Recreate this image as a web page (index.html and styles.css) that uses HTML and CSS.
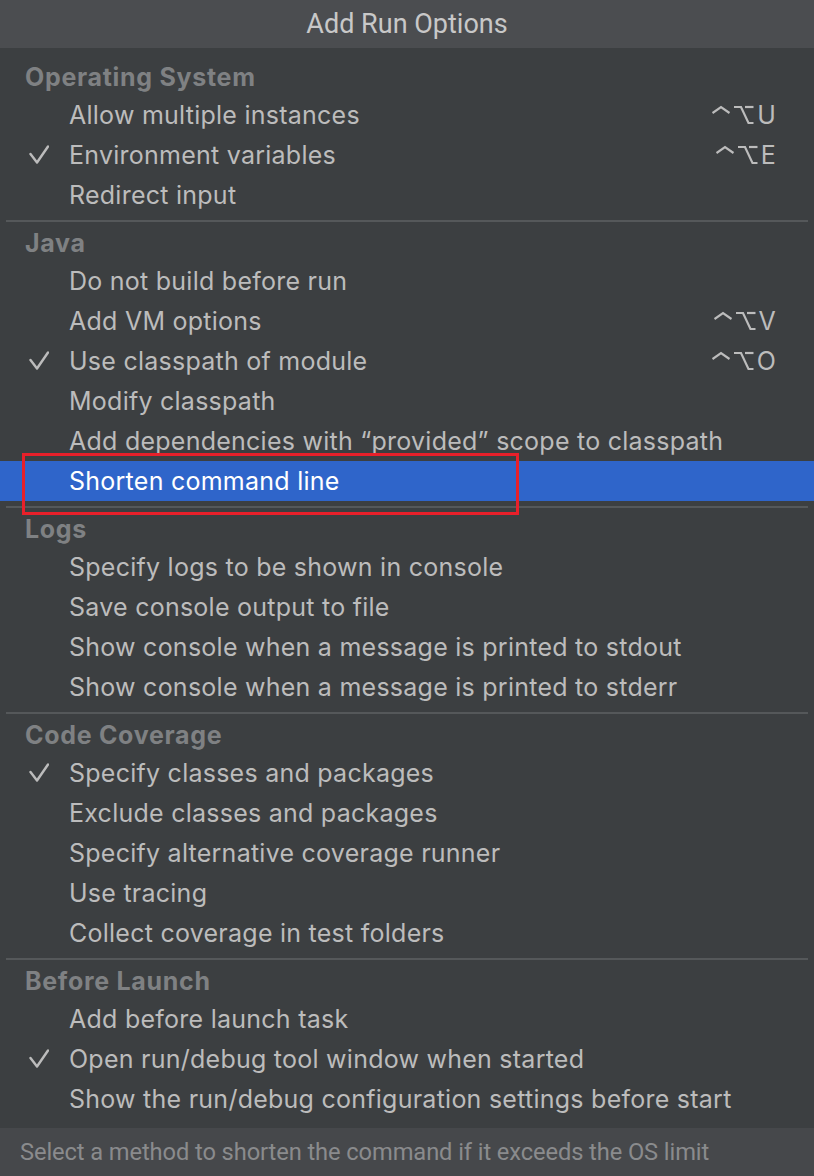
FILE: index.html
```html
<!DOCTYPE html>
<html>
<head>
<meta charset="utf-8">
<link rel="stylesheet" href="styles.css">
</head>
<body>
<div class="popup">
  <div class="title">Add Run Options</div>
  <div class="list">
    <div class="group-title">Operating System</div>
    <div class="item"><span class="check"></span><span class="label">Allow multiple instances</span><span class="kbd"><svg class="mods" viewBox="0 0 42 20" width="42" height="20"><polyline points="0.5,8 9,2.2 17.5,8"/><polyline points="22,2 29,2 36.5,18 41.5,18"/><line x1="33" y1="2" x2="41.5" y2="2"/></svg><span class="key">U</span></span></div>
    <div class="item"><span class="check"><svg viewBox="0 0 20 20" width="20" height="20"><polyline points="1.5,9 8,17.5 19,1.5"/></svg></span><span class="label">Environment variables</span><span class="kbd"><svg class="mods" viewBox="0 0 42 20" width="42" height="20"><polyline points="0.5,8 9,2.2 17.5,8"/><polyline points="22,2 29,2 36.5,18 41.5,18"/><line x1="33" y1="2" x2="41.5" y2="2"/></svg><span class="key">E</span></span></div>
    <div class="item"><span class="check"></span><span class="label">Redirect input</span></div>
    <div class="sep"></div>

    <div class="group-title">Java</div>
    <div class="item"><span class="check"></span><span class="label">Do not build before run</span></div>
    <div class="item"><span class="check"></span><span class="label">Add VM options</span><span class="kbd"><svg class="mods" viewBox="0 0 42 20" width="42" height="20"><polyline points="0.5,8 9,2.2 17.5,8"/><polyline points="22,2 29,2 36.5,18 41.5,18"/><line x1="33" y1="2" x2="41.5" y2="2"/></svg><span class="key">V</span></span></div>
    <div class="item"><span class="check"><svg viewBox="0 0 20 20" width="20" height="20"><polyline points="1.5,9 8,17.5 19,1.5"/></svg></span><span class="label">Use classpath of module</span><span class="kbd"><svg class="mods" viewBox="0 0 42 20" width="42" height="20"><polyline points="0.5,8 9,2.2 17.5,8"/><polyline points="22,2 29,2 36.5,18 41.5,18"/><line x1="33" y1="2" x2="41.5" y2="2"/></svg><span class="key">O</span></span></div>
    <div class="item"><span class="check"></span><span class="label">Modify classpath</span></div>
    <div class="item"><span class="check"></span><span class="label">Add dependencies with “provided” scope to classpath</span></div>
    <div class="item selected"><span class="check"></span><span class="label">Shorten command line</span><span class="highlight"></span></div>
    <div class="sep"></div>

    <div class="group-title">Logs</div>
    <div class="item"><span class="check"></span><span class="label">Specify logs to be shown in console</span></div>
    <div class="item"><span class="check"></span><span class="label">Save console output to file</span></div>
    <div class="item"><span class="check"></span><span class="label">Show console when a message is printed to stdout</span></div>
    <div class="item"><span class="check"></span><span class="label">Show console when a message is printed to stderr</span></div>
    <div class="sep"></div>

    <div class="group-title">Code Coverage</div>
    <div class="item"><span class="check"><svg viewBox="0 0 20 20" width="20" height="20"><polyline points="1.5,9 8,17.5 19,1.5"/></svg></span><span class="label">Specify classes and packages</span></div>
    <div class="item"><span class="check"></span><span class="label">Exclude classes and packages</span></div>
    <div class="item"><span class="check"></span><span class="label">Specify alternative coverage runner</span></div>
    <div class="item"><span class="check"></span><span class="label">Use tracing</span></div>
    <div class="item"><span class="check"></span><span class="label">Collect coverage in test folders</span></div>
    <div class="sep"></div>

    <div class="group-title">Before Launch</div>
    <div class="item"><span class="check"></span><span class="label">Add before launch task</span></div>
    <div class="item"><span class="check"><svg viewBox="0 0 20 20" width="20" height="20"><polyline points="1.5,9 8,17.5 19,1.5"/></svg></span><span class="label">Open run/debug tool window when started</span></div>
    <div class="item"><span class="check"></span><span class="label">Show the run/debug configuration settings before start</span></div>
  </div>
  <div class="footer">Select a method to shorten the command if it exceeds the OS limit</div>
</div>
</body>
</html>
```

FILE: styles.css
```css
html, body {
  margin: 0;
  padding: 0;
  background: #3c3f41;
}

.popup {
  width: 814px;
  height: 1176px;
  display: flex;
  flex-direction: column;
  background: #3c3f41;
  font-family: Inter, "Noto Sans", sans-serif;
  overflow: hidden;
}

.title {
  height: 48px;
  flex: none;
  display: flex;
  align-items: center;
  justify-content: center;
  background: #4b4d50;
  color: #c8c8c8;
  font-family: Roboto, "Noto Sans", sans-serif;
  font-size: 27px;
}

.list {
  flex: 1;
  padding-top: 11px;
}

.group-title {
  height: 36px;
  display: flex;
  align-items: center;
  padding-left: 25px;
  color: #7f8183;
  font-weight: 700;
  font-size: 25px;
  letter-spacing: 0.7px;
}

.item {
  position: relative;
  height: 40px;
  display: flex;
  align-items: center;
  color: #bcbcbc;
  font-size: 25px;
  letter-spacing: 0.25px;
}

.check {
  width: 69px;
  flex: none;
  display: flex;
  align-items: center;
  padding-left: 29px;
  box-sizing: border-box;
}

.check svg {
  fill: none;
  stroke: #bcbcbc;
  stroke-width: 2.4;
  stroke-linecap: round;
  stroke-linejoin: round;
}

.label {
  flex: 1;
  white-space: nowrap;
}

.kbd {
  margin-right: 38px;
  display: flex;
  align-items: center;
  gap: 3px;
  color: #bcbcbc;
}

.mods {
  fill: none;
  stroke: #bcbcbc;
  stroke-width: 2.2;
  stroke-linecap: butt;
  stroke-linejoin: miter;
}

.key {
  font-size: 25px;
}

.selected {
  background: #2f65ca;
  color: #ffffff;
}

.highlight {
  position: absolute;
  left: 22px;
  top: -8px;
  width: 497px;
  height: 62px;
  box-sizing: border-box;
  border: 3.5px solid #e8202a;
}

.sep {
  height: 2px;
  margin: 5px 6px 3px 6px;
  background: #55585a;
}

.footer {
  height: 48px;
  flex: none;
  display: flex;
  align-items: center;
  padding-left: 20px;
  background: #46484b;
  color: #8a8b8d;
  font-family: Roboto, "Noto Sans", sans-serif;
  font-size: 23.7px;
  letter-spacing: -0.1px;
}
```
